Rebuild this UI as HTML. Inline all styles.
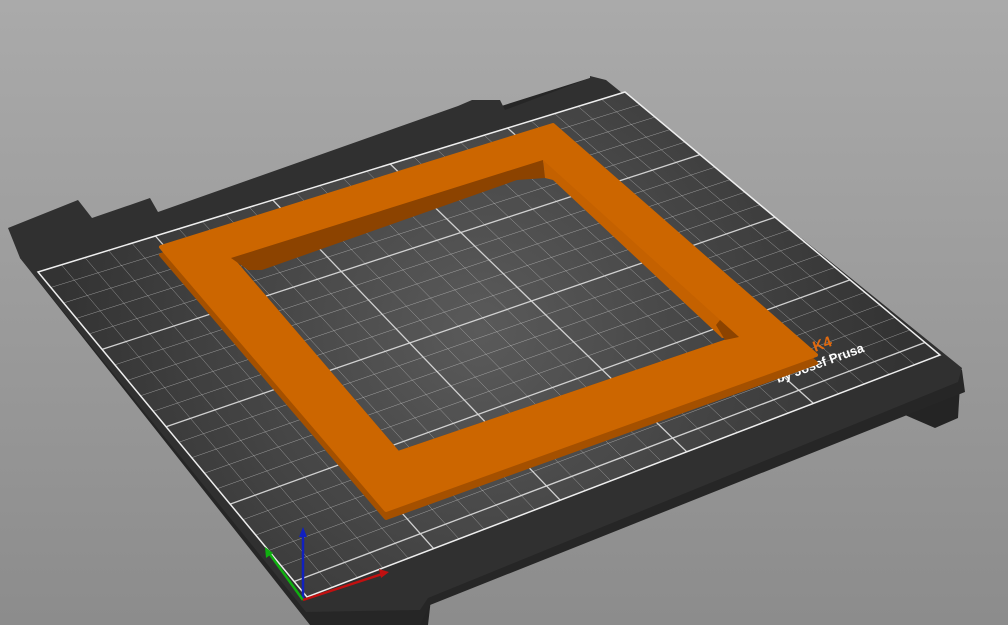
<!DOCTYPE html>
<html><head><meta charset="utf-8"><style>
html,body{margin:0;padding:0;width:1008px;height:625px;overflow:hidden}
body{background:linear-gradient(#aaaaaa,#8c8c8c)}
svg{position:absolute;left:0;top:0}
</style></head><body>
<svg id="s" width="1008" height="625" viewBox="0 0 1008 625" xmlns="http://www.w3.org/2000/svg">
<defs>
<radialGradient id="rg" cx="480" cy="330" r="420" gradientUnits="userSpaceOnUse">
<stop offset="0" stop-color="#5a5a5a"/><stop offset="1" stop-color="#333"/></radialGradient>
</defs>
<polygon points="900,395 960,385 958,418 935,428 905,415" fill="#242424"/>
<polygon points="400,600 432,590 428,625 395,625" fill="#242424"/>
<polygon points="20,258 310,625 420,625 430,605 965,392 962,370 600,80 590,78" fill="#262626"/>
<polygon points="590,76 606,80 962,368 958,382 428,598 420,610 306,612 20,258 8,228 78,200 92,218 130,205 150,198 158,212 458,106 472,100 500,100 505,110 590,78" fill="#303030"/>
<polygon points="38,272 625,92 940,355 307,597" fill="url(#rg)"/>
<g id="grid" stroke="#d8d8d8" fill="none"></g>
<polygon points="38,272 625,92 940,355 307,597" fill="none" stroke="#eee" stroke-width="1.5"/>
<text x="0" y="0" transform="translate(778,383) rotate(-20)" font-family="Liberation Sans, sans-serif" font-weight="bold" font-size="13" fill="#fff">by Josef Prusa</text>
<text x="0" y="0" transform="translate(815,352) rotate(-20)" font-family="Liberation Sans, sans-serif" font-weight="bold" font-size="15" fill="#e06a10">K4</text>
<path fill-rule="evenodd" fill="#a45000" stroke="#a45000" stroke-width="4" stroke-linejoin="round" d="M161,255 L553,133 L816,363 L386,518 Z M231,258 L543,160 L739,337 L398,453 Z"/>
<path fill-rule="evenodd" fill="#cc6600" stroke="#cc6600" stroke-width="4" stroke-linejoin="round" d="M161,247 L553,125 L816,355 L386,510 Z M231,258 L543,160 L739,337 L398,453 Z"/>
<polygon points="231,258 543,160 545,178 517,180 262,270 248,270" fill="#8c4300"/>
<polygon points="543,160 739,337 722,338 553,180 545,178" fill="#c46100"/>
<polygon points="720,320 739,337 725,340 716,325" fill="#8c4300"/>
<line x1="303" y1="600" x2="303" y2="534" stroke="#1020c0" stroke-width="2.5"/>
<polygon points="303,527 299,537 307,537" fill="#1020c0"/>
<line x1="303" y1="600" x2="269" y2="553" stroke="#10b010" stroke-width="2.5"/>
<polygon points="265,547 266,558 273,553" fill="#10b010"/>
<line x1="303" y1="600" x2="382" y2="574" stroke="#c01010" stroke-width="2.5"/>
<polygon points="389,572 379,569 381,578" fill="#c01010"/>
</svg>
<script>
(function(){
var L=[38,272],T=[625,92],R=[940,355],B=[307,597];
function P(u,v){return[(1-u)*(1-v)*L[0]+u*(1-v)*T[0]+u*v*R[0]+(1-u)*v*B[0],(1-u)*(1-v)*L[1]+u*(1-v)*T[1]+u*v*R[1]+(1-u)*v*B[1]];}
var g=document.getElementById('grid'),h='';
var NU=25,NV=21;
for(var i=1;i<NU;i++){var u=i/NU,a=P(u,0),b=P(u,1),w=i%5==0?1.3:0.5;h+='<line x1="'+a[0]+'" y1="'+a[1]+'" x2="'+b[0]+'" y2="'+b[1]+'" stroke-width="'+w+'" stroke-opacity="'+(i%5==0?0.95:0.6)+'"/>';}
for(var j=1;j<NV;j++){var v=j/NV,a=P(0,v),b=P(1,v),w=j%5==0?1.3:0.5;h+='<line x1="'+a[0]+'" y1="'+a[1]+'" x2="'+b[0]+'" y2="'+b[1]+'" stroke-width="'+w+'" stroke-opacity="'+(j%5==0?0.95:0.6)+'"/>';}
g.innerHTML=h;
})();
</script>
</body></html>
